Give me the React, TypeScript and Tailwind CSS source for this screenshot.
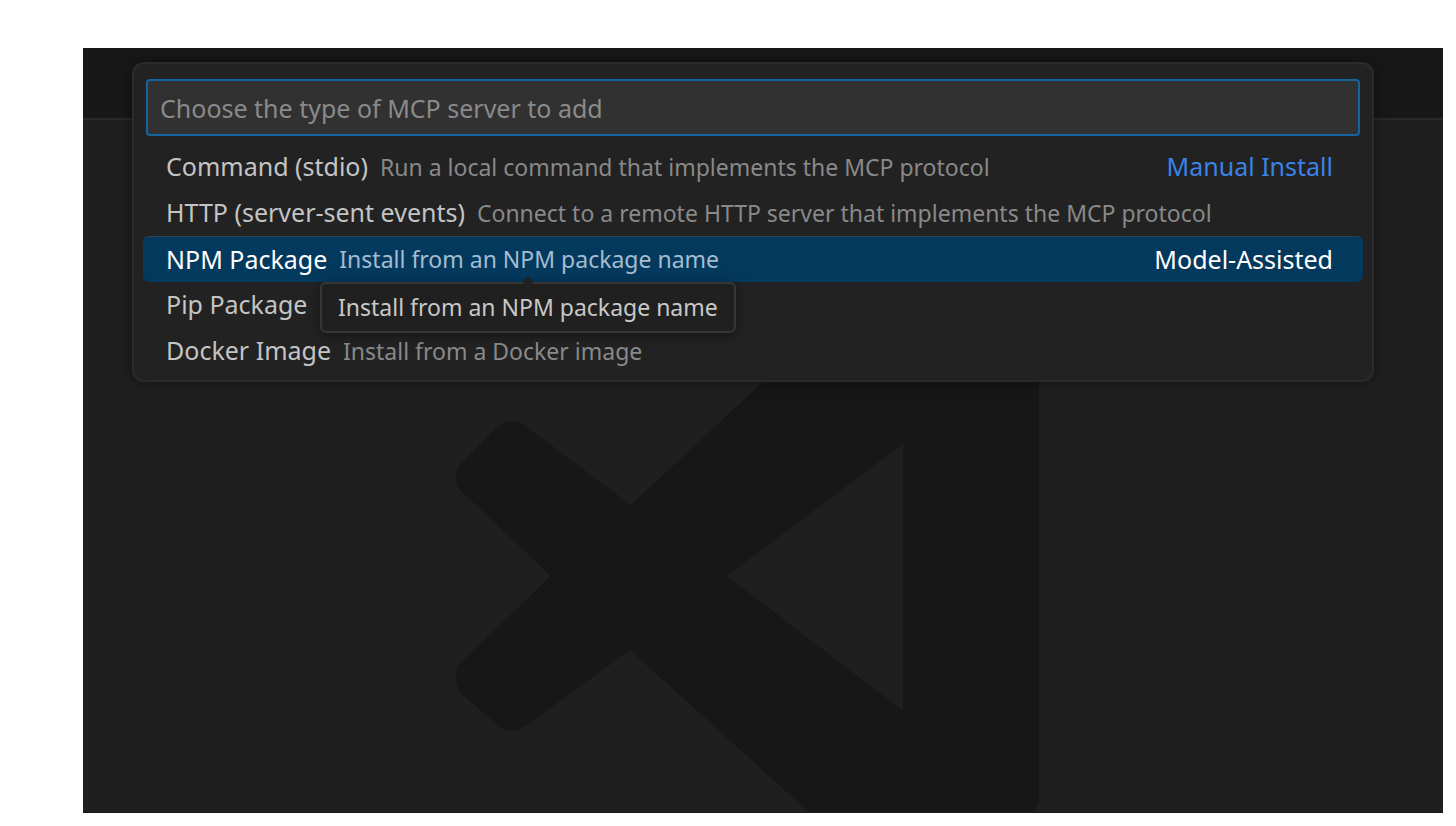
import clsx from "clsx";

type Item = {
  label: string;
  description: string;
  group?: string;
  active?: boolean;
};

const items: Item[] = [
  {
    label: "Command (stdio)",
    description: "Run a local command that implements the MCP protocol",
    group: "Manual Install",
  },
  {
    label: "HTTP (server-sent events)",
    description: "Connect to a remote HTTP server that implements the MCP protocol",
  },
  {
    label: "NPM Package",
    description: "Install from an NPM package name",
    group: "Model-Assisted",
    active: true,
  },
  { label: "Pip Package", description: "" },
  { label: "Docker Image", description: "Install from a Docker image" },
];

// Editor watermark. The top runs up behind the quick pick.
function Watermark() {
  return (
    <svg
      viewBox="0 0 584 693"
      className="h-[693px] w-[584px] shrink-0 text-[#171717]"
      fill="currentColor"
      fillRule="evenodd"
      aria-hidden="true"
    >
      <path d="M176 385 L76 310 Q58 294 43 306 L5 345 Q-3 356 3 368 L96 456 L3 545 Q-2 560 5 572 L43 606 Q58 617 75 603 L175 530 L355 693 H574 Q583 690 584 680 V150 H428 Z M448 324 L272 456 L448 591 Z" />
    </svg>
  );
}

function Tooltip({ text }: { text: string }) {
  return (
    <div
      role="tooltip"
      className="absolute top-full left-[177px] z-10 flex h-[51px] items-center rounded-md border-2 border-[#363636] bg-[#202020] px-4 text-[23px] whitespace-nowrap text-[#c8c8c8] shadow-[0_2px_12px_rgba(0,0,0,0.4)]"
    >
      <span className="absolute -top-[6px] left-1/2 size-2 -translate-x-1/2 rotate-45 bg-[#202020]" />
      {text}
    </div>
  );
}

function Row({ item }: { item: Item }) {
  return (
    <li className="relative">
      <button
        type="button"
        className={clsx(
          "flex h-[46px] w-full items-center rounded-md pr-[30px] pl-[23px] text-left whitespace-nowrap",
          item.active ? "border-t border-[#2f4354] bg-[#04395e] text-white" : "text-[#c4c4c4]",
        )}
      >
        <span className="text-[25px]">{item.label}</span>
        <span className={clsx("ml-3 text-[23px]", item.active ? "text-[#a3bcd0]" : "text-[#898989]")}>
          {item.description}
        </span>
        {item.group && (
          <span className={clsx("ml-auto text-[25px]", item.active ? "text-white" : "text-[#3b82e6]")}>
            {item.group}
          </span>
        )}
      </button>
      {item.active && <Tooltip text={item.description} />}
    </li>
  );
}

function QuickPick() {
  return (
    <div className="absolute top-[14px] right-[69px] left-[49px] rounded-xl border-2 border-[#2b2b2b] bg-[#222222] pt-[15px] pb-1.5 shadow-[0_0_16px_rgba(0,0,0,0.4)]">
      <div className="px-3">
        <input
          type="text"
          aria-label="Choose the type of MCP server to add"
          placeholder="Choose the type of MCP server to add"
          className="h-[57px] w-full rounded-sm border-2 border-[#13649f] bg-[#313131] px-3 text-[25px] text-[#cccccc] outline-none placeholder:text-[#8a8a8a]"
        />
      </div>
      <ul className="mt-2 px-[9px]">
        {items.map((item) => (
          <Row key={item.label} item={item} />
        ))}
      </ul>
    </div>
  );
}

export default function App() {
  return (
    <div className="flex h-screen flex-col bg-white pt-12 pr-[13px] pb-[13px] pl-[83px] font-['Noto_Sans','Open_Sans',sans-serif]">
      <div className="relative flex min-h-0 flex-1 flex-col overflow-hidden border-b border-[#1a1718] bg-[#1f1f1f]">
        <header className="h-[72px] shrink-0 border-b-2 border-[#2a2a2a] bg-[#181818]" />
        <main className="flex justify-center pr-8">
          <Watermark />
        </main>
        <QuickPick />
      </div>
    </div>
  );
}
